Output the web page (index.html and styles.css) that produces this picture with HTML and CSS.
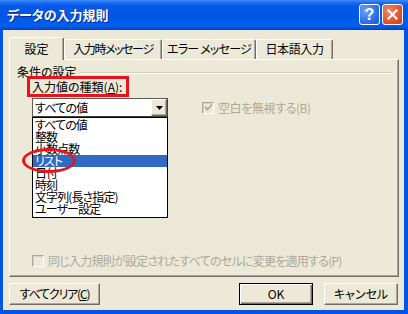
FILE: index.html
```html
<!DOCTYPE html>
<html lang="ja">
<head>
<meta charset="utf-8">
<title>データの入力規則</title>
<link rel="stylesheet" href="styles.css">
</head>
<body>
<div class="window">
  <div class="titlebar">
    <span class="title">データの入力規則</span>
    <div class="caption-buttons">
      <span class="cbtn help">?</span>
      <span class="cbtn close"><svg width="11" height="11" viewBox="0 0 11 11"><path d="M1.5 1.5 L9.5 9.5 M9.5 1.5 L1.5 9.5" stroke="#fff" stroke-width="2.2" stroke-linecap="square"/></svg></span>
    </div>
  </div>
  <div class="client">
    <div class="tabs">
      <div class="tab active t1">設定</div>
      <div class="tab t2">入力時メッセージ</div>
      <div class="tab t3">エラー メッセージ</div>
      <div class="tab t4">日本語入力</div>
    </div>
    <div class="panel">
      <div class="group-head"><span class="group-title">条件の設定</span><span class="rule"></span></div>
      <div class="field-label"><span class="hl">入力値の種類(<u>A</u>):</span></div>
      <div class="row">
        <div class="combo-wrap">
          <div class="combo">
            <span class="combo-text">すべての値</span>
            <span class="drop"><svg width="7" height="4" viewBox="0 0 7 4"><path d="M0 0 H7 L3.5 4 Z" fill="#000"/></svg></span>
          </div>
          <ul class="list">
            <li>すべての値</li>
            <li>整数</li>
            <li>小数点数</li>
            <li class="sel">リスト</li>
            <li>日付</li>
            <li>時刻</li>
            <li>文字列(長さ指定)</li>
            <li>ユーザー設定</li>
          </ul>
          <span class="circle"></span>
        </div>
        <div class="check top-check"><span class="box"><svg width="9" height="9" viewBox="0 0 9 9"><path d="M1 4 L3.5 6.5 L8 1.5" stroke="#ACA899" stroke-width="1.8" fill="none"/></svg></span><span>空白を無視する(B)</span></div>
      </div>
      <div class="check bottom-check"><span class="box"></span><span>同じ入力規則が設定されたすべてのセルに変更を適用する(P)</span></div>
    </div>
    <div class="buttons">
      <button class="btn clear">すべてクリア(<u>C</u>)</button>
      <button class="btn ok">OK</button>
      <button class="btn cancel">キャンセル</button>
    </div>
  </div>
</div>
</body>
</html>
```

FILE: styles.css
```css
html, body {
  margin: 0;
  padding: 0;
}
body {
  width: 408px;
  height: 314px;
  overflow: hidden;
  background: #ECE9D8;
  font-family: "Noto Sans CJK JP", "Noto Sans", sans-serif;
  font-size: 12px;
  font-feature-settings: "palt";
  color: #000;
}
.window {
  width: 408px;
  height: 314px;
  display: flex;
  flex-direction: column;
}
.titlebar {
  height: 30px;
  flex: none;
  box-sizing: border-box;
  display: flex;
  align-items: center;
  justify-content: space-between;
  padding: 0 5px 1px 7px;
  background: linear-gradient(#3D8EF8 0, #1A6AF0 3px, #0659E8 6px, #0056E4 55%, #0060EE 85%, #0052DC 93%, #0040BC 100%);
}
.title {
  color: #fff;
  font-weight: bold;
  font-size: 13px;
  line-height: 16px;
  text-shadow: 1px 1px 0 #0A2A8C;
}
.caption-buttons {
  display: flex;
  gap: 2px;
}
.cbtn {
  width: 21px;
  height: 21px;
  box-sizing: border-box;
  border: 1px solid #fff;
  border-radius: 3px;
  display: flex;
  align-items: center;
  justify-content: center;
}
.help {
  background: radial-gradient(circle at 30% 30%, #6FA3F7 0, #2F6FE8 60%, #1D55D4 100%);
  color: #fff;
  font: bold 16px/1 "Liberation Sans", sans-serif;
}
.close {
  background: radial-gradient(circle at 30% 30%, #F0866A 0, #E1542E 60%, #C8401C 100%);
}
.client {
  flex: 1;
  display: flex;
  flex-direction: column;
  border-style: solid;
  border-color: #0055E5;
  border-width: 0 4px 4px 3px;
  background: #ECE9D8;
}
.tabs {
  display: flex;
  align-items: flex-end;
  height: 22px;
  margin-top: 7px;
  padding-left: 6px;
  position: relative;
  z-index: 1;
}
.tab {
  box-sizing: border-box;
  height: 20px;
  padding-top: 2px;
  line-height: 14px;
  text-align: center;
  white-space: nowrap;
  border: 1px solid;
  border-bottom: 0;
  border-color: #fff #716F64 transparent #fff;
  border-radius: 2px 2px 0 0;
  box-shadow: inset -1px 0 0 #ACA899;
  background: #ECE9D8;
}
.tab.active {
  height: 23px;
  padding-top: 4px;
  margin-bottom: -1px;
}
.t1 { width: 55px; }
.t2 { width: 98px; letter-spacing: -1.4px; }
.t3 { width: 94px; letter-spacing: -0.8px; }
.t4 { width: 77px; letter-spacing: -0.4px; }
.panel {
  margin: 0 5px 0 6px;
  height: 218px;
  box-sizing: border-box;
  border: 1px solid;
  border-color: #fff #716F64 #716F64 #fff;
  box-shadow: inset -1px -1px 0 #ACA899;
  display: flex;
  flex-direction: column;
}
.group-head {
  display: flex;
  align-items: center;
  margin-top: 5px;
  padding-left: 7px;
  height: 14px;
  line-height: 14px;
}
.rule {
  flex: 1;
  height: 0;
  border-top: 1px solid #D0D0BF;
  border-bottom: 1px solid #fff;
  margin: 1px 6px 0 3px;
}
.field-label {
  margin-top: -3px;
  padding-left: 17px;
}
.hl {
  display: inline-block;
  border: 3px solid #E8141B;
  padding: 0 4px 0 2px;
  line-height: 15px;
}
.row {
  display: flex;
  align-items: center;
  margin-top: 1px;
  padding-left: 22px;
}
.combo-wrap {
  position: relative;
  width: 136px;
}
.combo {
  height: 19px;
  box-sizing: border-box;
  border: 1px solid;
  border-color: #5E5C52 #404040 #404040 #5E5C52;
  background: #fff;
  display: flex;
  align-items: center;
  justify-content: space-between;
  padding-left: 2px;
}
.combo-text {
  line-height: 14px;
  letter-spacing: -0.8px;
}
.drop {
  width: 16px;
  height: 17px;
  box-sizing: border-box;
  border: 1px solid;
  border-color: #fff #716F64 #716F64 #fff;
  box-shadow: inset -1px -1px 0 #ACA899;
  background: #ECE9D8;
  display: flex;
  align-items: center;
  justify-content: center;
}
.list {
  position: absolute;
  left: 0;
  top: 19px;
  width: 136px;
  box-sizing: border-box;
  margin: 0;
  padding: 1px 0 2px;
  list-style: none;
  background: #fff;
  border: 1px solid #000;
  z-index: 2;
  letter-spacing: -0.9px;
}
.list li {
  height: 12px;
  line-height: 12px;
  padding-left: 2px;
  white-space: nowrap;
}
.list li.sel {
  background: #316AC5;
  color: #fff;
}
.circle {
  position: absolute;
  left: -10px;
  top: 50px;
  width: 54px;
  height: 25px;
  box-sizing: border-box;
  border: 3px solid #E8141B;
  border-radius: 50%;
  z-index: 3;
}
.check {
  display: flex;
  align-items: center;
  gap: 4px;
  color: #ACA899;
  line-height: 14px;
  white-space: nowrap;
}
.top-check {
  margin-left: 34px;
  letter-spacing: -0.4px;
}
.box {
  width: 12px;
  height: 12px;
  box-sizing: border-box;
  border: 1px solid;
  border-color: #ACA899 #fff #fff #ACA899;
  box-shadow: inset 1px 1px 0 #D4D0C8;
  display: flex;
  align-items: center;
  justify-content: center;
}
.bottom-check {
  margin-top: auto;
  margin-bottom: 8px;
  padding-left: 22px;
  letter-spacing: -0.75px;
}
.buttons {
  display: flex;
  margin: 6px 6px 0 6px;
  height: 22px;
}
.btn {
  font: inherit;
  height: 22px;
  box-sizing: border-box;
  padding: 0;
  background: #ECE9D8;
  color: #000;
  border: 1px solid;
  border-color: #fff #716F64 #716F64 #fff;
  box-shadow: inset -1px -1px 0 #ACA899;
  line-height: 14px;
}
.clear {
  width: 91px;
  letter-spacing: -1.2px;
}
.ok {
  width: 74px;
  margin-left: auto;
  border: 1px solid #000;
  box-shadow: inset 1px 1px 0 #fff, inset -1px -1px 0 #716F64, inset -2px -2px 0 #ACA899;
}
.cancel {
  width: 74px;
  margin-left: 11px;
}
```
